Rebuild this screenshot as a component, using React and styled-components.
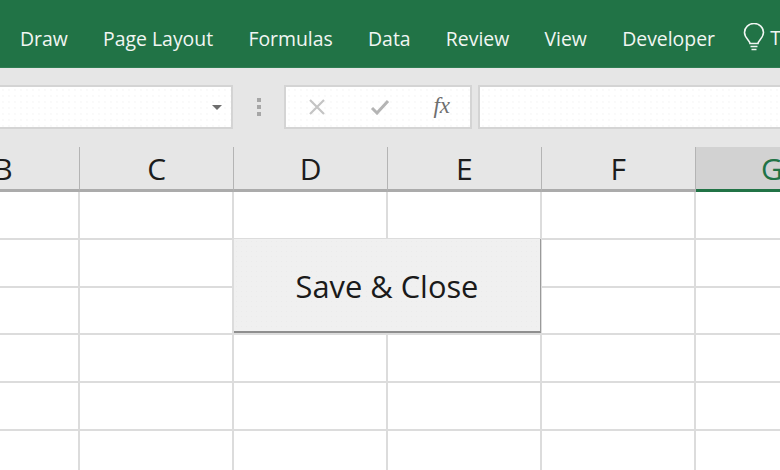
import React from "react";
import styled, { createGlobalStyle } from "styled-components";

const GlobalStyle = createGlobalStyle`
  html, body {
    margin: 0;
    padding: 0;
    background: #fff;
    overflow: hidden;
  }
  * {
    box-sizing: border-box;
  }
`;

const Page = styled.div`
  width: 780px;
  height: 470px;
  overflow: hidden;
  font-family: "Open Sans", "Noto Sans", sans-serif;
`;

const Ribbon = styled.div`
  height: 68px;
  background: #217346;
  border-bottom: 1px solid #2f7d52;
  display: flex;
  align-items: center;
  padding: 10px 0 0 20px;
  gap: 35.3px;
  color: #f1f6f3;
  font-size: 19.4px;
  white-space: nowrap;
`;

const Tab = styled.span`
  display: block;
`;

const Tell = styled.div`
  display: flex;
  align-items: center;
  gap: 5px;
  margin: -2px 0 0 -7px;
`;

const FormulaBar = styled.div`
  height: 79px;
  background: #e6e6e6;
  display: flex;
  padding-top: 17px;
  align-items: flex-start;
`;

const Field = styled.div`
  height: 44px;
  background-color: #fff;
  background-image: radial-gradient(#f3f3f3 0.6px, transparent 0.8px);
  background-size: 6px 6px;
  border: 2px solid #d4d4d4;
  display: flex;
  align-items: center;
`;

const NameBox = styled(Field)`
  width: 233px;
  border-left: 0;
  justify-content: flex-end;
  padding-right: 9px;
`;

const Caret = styled.div`
  width: 0;
  height: 0;
  border-left: 5px solid transparent;
  border-right: 5px solid transparent;
  border-top: 5px solid #6d6d6d;
`;

const Grip = styled.div`
  width: 51px;
  height: 44px;
  display: flex;
  flex-direction: column;
  align-items: center;
  justify-content: center;
  gap: 3px;
`;

const GripDot = styled.span`
  width: 4px;
  height: 4px;
  background: #a6a6a6;
`;

const Actions = styled(Field)`
  width: 188px;
  padding: 0 20px 0 22px;
  justify-content: space-between;
`;

const FxLabel = styled.span`
  font-family: "Liberation Serif", serif;
  font-style: italic;
  font-size: 23px;
  color: #6e6e6e;
  margin-top: -2px;
`;

const FormulaInput = styled(Field)`
  flex: 1;
  margin-left: 6px;
  border-right: 0;
`;

const Headers = styled.div`
  height: 45px;
  background: #e6e6e6;
  display: flex;
  margin-left: -73.4px;
`;

const HeaderCell = styled.div`
  width: 153.8px;
  flex: none;
  display: flex;
  align-items: center;
  justify-content: center;
  font-size: 30px;
  color: ${(p) => (p.$active ? "#217346" : "#1c1c1c")};
  background: ${(p) => (p.$active ? "#d2d2d2" : "#e6e6e6")};
  border-right: 1px solid #b4b4b4;
  border-bottom: 3px solid ${(p) => (p.$active ? "#217346" : "#ababab")};
`;

const Sheet = styled.div`
  position: relative;
  margin-left: -73.4px;
`;

const Row = styled.div`
  height: 47.8px;
  display: flex;
  border-bottom: 2px solid #dcdcdc;
`;

const Cell = styled.div`
  width: 153.8px;
  flex: none;
  border-right: 2px solid #dcdcdc;
`;

const SaveButton = styled.button`
  position: absolute;
  left: 307.4px;
  top: 47px;
  width: 307px;
  height: 94px;
  background-color: #f0f0f0;
  background-image: radial-gradient(#ebebeb 0.6px, transparent 0.8px);
  background-size: 5px 5px;
  border: 0;
  border-right: 1px solid #9a9a9a;
  border-bottom: 2px solid #8f8f8f;
  padding: 2px 0 0;
  font-family: "Open Sans", "Noto Sans", sans-serif;
  font-size: 30.8px;
  color: #1a1a1a;
`;

const tabs = ["Draw", "Page Layout", "Formulas", "Data", "Review", "View", "Developer"];
const columns = ["B", "C", "D", "E", "F", "G"];
const rows = [0, 1, 2, 3, 4, 5];

const BulbIcon = () => (
  <svg width="22" height="30" viewBox="0 0 22 30" fill="none" stroke="#f1f6f3" strokeWidth="1.6">
    <path d="M7 20.5c0-3-5.5-5.5-5.5-11a9.5 9 0 0 1 19 0c0 5.5-5.5 8-5.5 11z" />
    <path d="M7.5 23.5h7M8.5 26.5h5" />
  </svg>
);

const CloseIcon = () => (
  <svg width="18" height="18" viewBox="0 0 18 18" fill="none" stroke="#c4c4c4" strokeWidth="2.2">
    <path d="M2 2l14 14M16 2L2 16" />
  </svg>
);

const CheckIcon = () => (
  <svg width="20" height="16" viewBox="0 0 20 16" fill="none" stroke="#b4b4b4" strokeWidth="3">
    <path d="M2 9l5 5L18 2" />
  </svg>
);

const App = () => {
  return (
    <Page>
      <GlobalStyle />
      <Ribbon>
        {tabs.map((tab) => (
          <Tab key={tab}>{tab}</Tab>
        ))}
        <Tell>
          <BulbIcon />
          <Tab>T</Tab>
        </Tell>
      </Ribbon>
      <FormulaBar>
        <NameBox>
          <Caret />
        </NameBox>
        <Grip>
          <GripDot />
          <GripDot />
          <GripDot />
        </Grip>
        <Actions>
          <CloseIcon />
          <CheckIcon />
          <FxLabel>fx</FxLabel>
        </Actions>
        <FormulaInput />
      </FormulaBar>
      <Headers>
        {columns.map((col) => (
          <HeaderCell key={col} $active={col === "G"}>
            {col}
          </HeaderCell>
        ))}
      </Headers>
      <Sheet>
        {rows.map((row) => (
          <Row key={row}>
            {columns.map((col) => (
              <Cell key={col} />
            ))}
          </Row>
        ))}
        <SaveButton>Save &amp; Close</SaveButton>
      </Sheet>
    </Page>
  );
};

export default App;
